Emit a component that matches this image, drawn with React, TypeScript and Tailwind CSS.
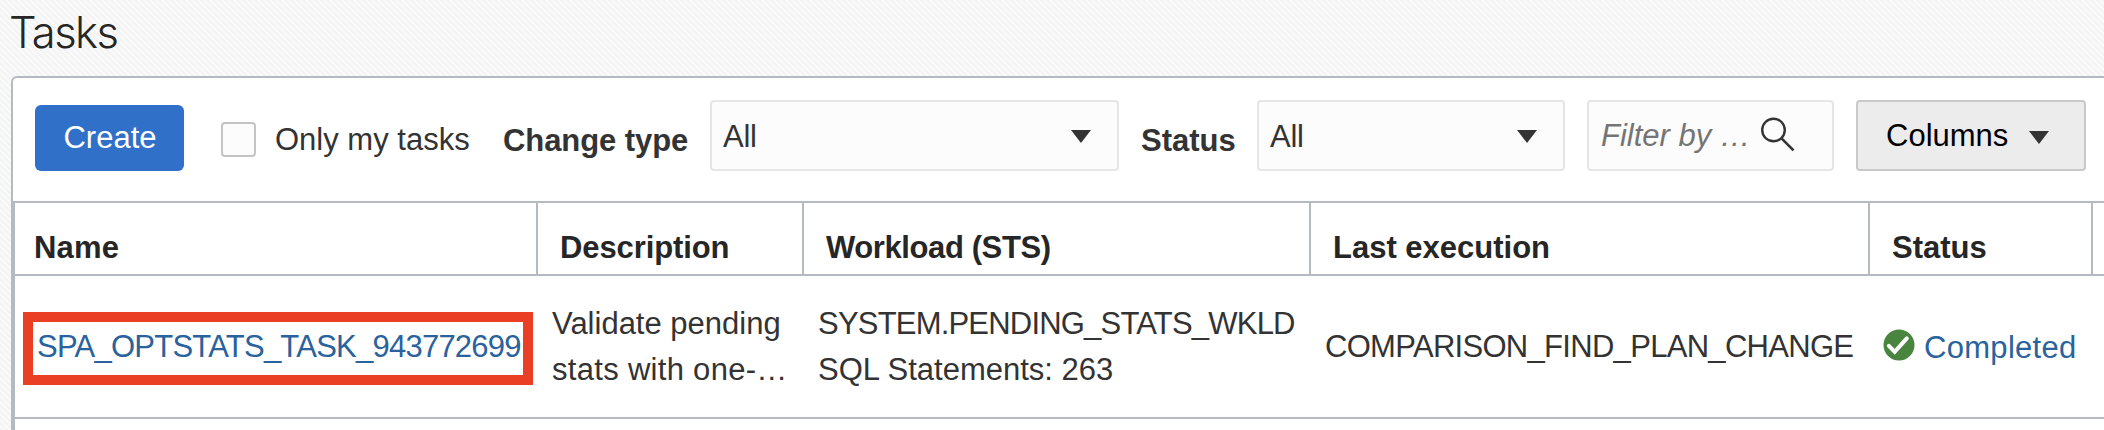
import type { ReactNode } from "react";

function Caret({ className }: { className: string }) {
  return (
    <svg viewBox="0 0 20 13" className={`h-[13px] w-5 shrink-0 ${className}`} aria-hidden="true">
      <path d="M0 0H20L10 13Z" fill="#333333" />
    </svg>
  );
}

function Select({ value, className }: { value: string; className: string }) {
  return (
    <div className={`flex h-[71px] shrink-0 items-start justify-between rounded border-2 border-[#e6e6e6] bg-[#fcfcfc] pl-[11px] ${className}`}>
      <span className="pt-[12px] leading-[46px] tracking-[-0.3px]">{value}</span>
      <Caret className="mt-[28px]" />
    </div>
  );
}

function HeadCell({ children, className }: { children?: ReactNode; className: string }) {
  return (
    <div className={`shrink-0 border-[#b5bac1] pt-[22px] leading-[46px] font-bold text-[#262626] ${className}`}>{children}</div>
  );
}

function SearchIcon() {
  return (
    <svg viewBox="0 0 36 36" className="mt-[14px] ml-[11px] size-9 shrink-0" fill="none" stroke="#333333" strokeWidth="2.4" aria-hidden="true">
      <circle cx="13.5" cy="14" r="11.3" />
      <path d="M21.3 22.1L33.5 34.3" strokeWidth="2.6" />
    </svg>
  );
}

function CompletedIcon() {
  return (
    <svg viewBox="0 0 32 32" className="h-8 w-8 shrink-0" aria-hidden="true">
      <circle cx="16" cy="16" r="15.5" fill="#4a8540" />
      <path d="M5.9 16.8L11.7 22.8L23.8 9.4" fill="none" stroke="#ffffff" strokeWidth="4" strokeLinecap="round" />
    </svg>
  );
}

export default function App() {
  return (
    <div className="h-[430px] w-[2104px] overflow-hidden bg-[#f9f9f9] bg-[repeating-linear-gradient(45deg,#f4f4f4_0px,#f4f4f4_1.6px,#fafafa_2.2px,#fafafa_3.8px,#f4f4f4_4.2426px)] pl-[11px] font-['Liberation_Sans',Arial,sans-serif] text-[31px] text-[#333333]">
      <h1 className="-ml-[2px] h-[76px] pt-[5px] font-['Inter',sans-serif] text-[43.5px] leading-[54px] font-light tracking-[-1.6px] text-[#262626]">Tasks</h1>

      <main className="h-[370px] w-[2120px] rounded-tl-md border-t-2 border-l-2 border-[#b5bac1] bg-white">
        <div className="flex h-[123px] items-start pt-[22px] pl-[22px]">
          <button className="mt-[5px] h-[66px] w-[149px] shrink-0 rounded-md bg-[#3070c8] pl-[1px] leading-[66px] text-white">Create</button>
          <span className="mt-[22px] ml-[37px] size-[35px] shrink-0 rounded border-2 border-[#c4c4c4] bg-[#fcfcfc]" />
          <span className="mt-[17px] ml-[19px] w-[228px] shrink-0 leading-[46px]">Only my tasks</span>
          <span className="mt-[18px] w-[207px] shrink-0 leading-[46px] font-bold tracking-[-0.08px]">Change type</span>
          <Select value="All" className="w-[409px] pr-[26px]" />
          <span className="mt-[18px] ml-[22px] w-[116px] shrink-0 leading-[46px] font-bold">Status</span>
          <Select value="All" className="w-[308px] pr-[26px]" />
          <div className="ml-[22px] flex h-[71px] w-[247px] shrink-0 items-start rounded border-2 border-[#e6e6e6] bg-[#fcfcfc] pl-[12px]">
            <span className="w-[148px] pt-[11px] leading-[46px] whitespace-nowrap text-[#757575] italic">Filter by …</span>
            <SearchIcon />
          </div>
          <button className="ml-[22px] flex h-[71px] w-[230px] shrink-0 items-start rounded border-2 border-[#c9c9c9] bg-[#ececec] pl-[28px] text-black">
            <span className="w-[143px] pt-[11px] text-left leading-[46px]">Columns</span>
            <Caret className="mt-[29px]" />
          </button>
        </div>

        <section className="h-[240px] border-t-2 border-l-2 border-[#b5bac1]">
          <div className="flex h-[71px]">
            <HeadCell className="w-[523px] border-r-2 pl-[19px] tracking-[0.2px]">Name</HeadCell>
            <HeadCell className="w-[266px] border-r-2 pl-[22px] tracking-[-0.1px]">Description</HeadCell>
            <HeadCell className="w-[507px] border-r-2 pl-[22px] tracking-[-0.4px]">Workload (STS)</HeadCell>
            <HeadCell className="w-[559px] border-r-2 pl-[22px]">Last execution</HeadCell>
            <HeadCell className="w-[223px] border-r-2 pl-[22px]">Status</HeadCell>
          </div>
          <div className="flex h-[145px] border-y-2 border-[#b5bac1]">
            <div className="w-[537px] shrink-0 pt-[36px] pl-[8px]">
              <div className="h-[73px] w-[510px] border-10 border-[#ea3f25] pt-[2px] pl-[4px]">
                <a className="leading-[46px] tracking-[-0.76px] whitespace-nowrap text-[#2a629d]">SPA_OPTSTATS_TASK_943772699</a>
              </div>
            </div>
            <div className="w-[266px] shrink-0 pt-[25px] leading-[46px]">
              <div>Validate pending</div>
              <div className="tracking-[0.3px]">stats with one-…</div>
            </div>
            <div className="w-[507px] shrink-0 pt-[25px] leading-[46px]">
              <div className="tracking-[-0.8px]">SYSTEM.PENDING_STATS_WKLD</div>
              <div>SQL Statements: 263</div>
            </div>
            <div className="w-[558px] shrink-0 pt-[48px] leading-[46px] tracking-[-0.7px]">COMPARISON_FIND_PLAN_CHANGE</div>
            <div className="flex shrink-0 items-start pt-[53px] text-[#2a629d]">
              <CompletedIcon />
              <a className="-mt-[4px] ml-[9px] leading-[46px] tracking-[0.3px]">Completed</a>
            </div>
          </div>
        </section>
      </main>
    </div>
  );
}
